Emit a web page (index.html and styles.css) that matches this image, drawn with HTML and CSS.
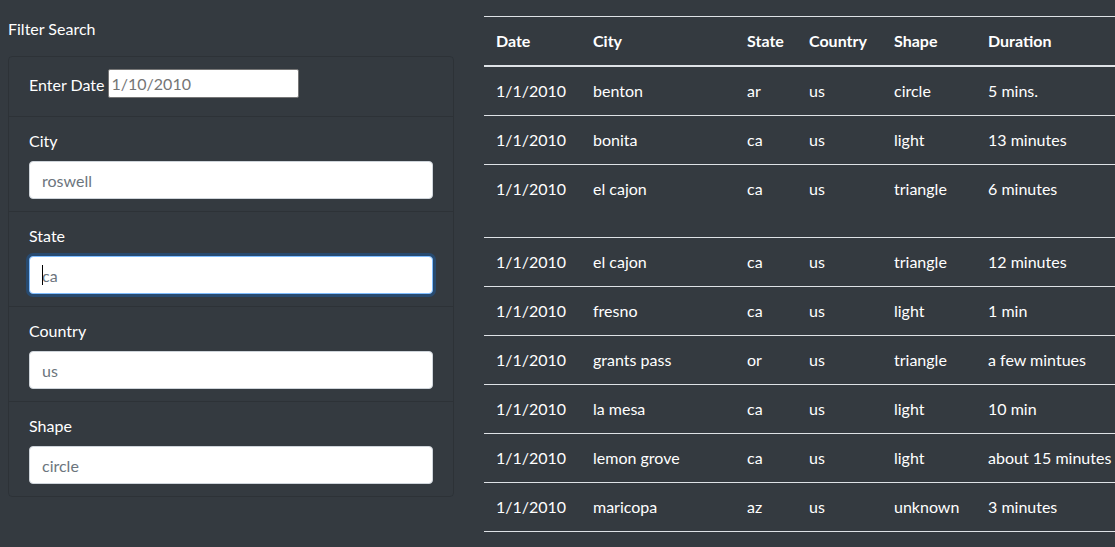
FILE: index.html
```html
<!DOCTYPE html>
<html lang="en">
<head>
<meta charset="utf-8">
<title>UFO Sightings</title>
<link rel="stylesheet" href="styles.css">
</head>
<body>
<div class="page">
  <aside class="filters">
    <div class="filters-title">Filter Search</div>
    <ul class="card">
      <li class="item item-date">
        <label class="inline-label" for="datetime">Enter Date</label>
        <input class="date-input" id="datetime" type="text" placeholder="1/10/2010">
      </li>
      <li class="item">
        <label class="label" for="city">City</label>
        <input class="form-control" id="city" type="text" placeholder="roswell">
      </li>
      <li class="item">
        <label class="label" for="state">State</label>
        <div class="field-wrap">
          <input class="form-control focused" id="state" type="text" placeholder="ca">
          <span class="caret"></span>
        </div>
      </li>
      <li class="item">
        <label class="label" for="country">Country</label>
        <input class="form-control" id="country" type="text" placeholder="us">
      </li>
      <li class="item">
        <label class="label" for="shape">Shape</label>
        <input class="form-control" id="shape" type="text" placeholder="circle">
      </li>
    </ul>
  </aside>
  <main class="results">
    <table class="table">
      <colgroup>
        <col class="c-date"><col class="c-city"><col class="c-state"><col class="c-country"><col class="c-shape"><col class="c-duration">
      </colgroup>
      <thead>
        <tr><th>Date</th><th>City</th><th>State</th><th>Country</th><th>Shape</th><th>Duration</th></tr>
      </thead>
      <tbody>
        <tr><td>1/1/2010</td><td>benton</td><td>ar</td><td>us</td><td>circle</td><td>5 mins.</td></tr>
        <tr><td>1/1/2010</td><td>bonita</td><td>ca</td><td>us</td><td>light</td><td>13 minutes</td></tr>
        <tr class="tall"><td>1/1/2010</td><td>el cajon</td><td>ca</td><td>us</td><td>triangle</td><td>6 minutes</td></tr>
        <tr><td>1/1/2010</td><td>el cajon</td><td>ca</td><td>us</td><td>triangle</td><td>12 minutes</td></tr>
        <tr><td>1/1/2010</td><td>fresno</td><td>ca</td><td>us</td><td>light</td><td>1 min</td></tr>
        <tr><td>1/1/2010</td><td>grants pass</td><td>or</td><td>us</td><td>triangle</td><td>a few mintues</td></tr>
        <tr><td>1/1/2010</td><td>la mesa</td><td>ca</td><td>us</td><td>light</td><td>10 min</td></tr>
        <tr><td>1/1/2010</td><td>lemon grove</td><td>ca</td><td>us</td><td>light</td><td>about 15 minutes</td></tr>
        <tr><td>1/1/2010</td><td>maricopa</td><td>az</td><td>us</td><td>unknown</td><td>3 minutes</td></tr>
      </tbody>
    </table>
  </main>
</div>
</body>
</html>
```
FILE: styles.css
```css
html, body {
  margin: 0;
  padding: 0;
  height: 100%;
  overflow: hidden;
}
body {
  background: #343a40;
  color: #ffffff;
  font-family: "Lato", "Liberation Sans", sans-serif;
  font-size: 16px;
  line-height: 24px;
}
.page {
  display: flex;
  align-items: flex-start;
  padding: 16px 0 0 8px;
}
.filters {
  flex: 0 0 446px;
  margin-right: 30px;
}
.filters-title {
  padding-top: 1px;
  margin-bottom: 15px;
}
.card {
  list-style: none;
  margin: 0;
  padding: 0;
  border: 1px solid rgba(0, 0, 0, 0.13);
  border-radius: 4px;
}
.item {
  padding: 12px 20px;
  border-top: 1px solid rgba(0, 0, 0, 0.13);
}
.item:first-child {
  border-top: 0;
}
.item-date {
  height: 59px;
  box-sizing: border-box;
  display: flex;
  align-items: flex-start;
}
.inline-label {
  margin-top: 4px;
  margin-right: 3px;
}
.date-input {
  width: 191px;
  height: 29px;
  box-sizing: border-box;
  border: 1px solid #767676;
  border-radius: 2px;
  padding: 1px 3px;
  font-family: inherit;
  font-size: 16px;
  color: #495057;
  background: #fff;
}
.date-input::placeholder {
  color: #757575;
}
.label {
  display: block;
  margin-bottom: 8px;
}
.form-control {
  display: block;
  width: 100%;
  height: 38px;
  box-sizing: border-box;
  padding: 6px 12px;
  font-family: inherit;
  font-size: 16px;
  line-height: 24px;
  color: #495057;
  background: #fff;
  border: 1px solid #ced4da;
  border-radius: 4px;
  outline: none;
}
.form-control::placeholder {
  color: #6c757d;
}
.field-wrap {
  position: relative;
}
.form-control.focused {
  border-color: #80bdff;
  box-shadow: 0 0 0 3px rgba(0, 123, 255, 0.25);
}
.caret {
  position: absolute;
  left: 13px;
  top: 9px;
  width: 1px;
  height: 20px;
  background: #000;
}
.results {
  flex: 1 1 auto;
  min-width: 0;
  overflow: hidden;
}
.table {
  border-collapse: collapse;
  table-layout: fixed;
  width: 100%;
}
.c-date { width: 97px; }
.c-city { width: 154px; }
.c-state { width: 62px; }
.c-country { width: 85px; }
.c-shape { width: 94px; }
.table th,
.table td {
  padding: 12px;
  text-align: left;
  vertical-align: top;
  border-top: 1px solid #dee2e6;
  white-space: nowrap;
}
.table th {
  font-weight: 700;
  border-bottom: 2px solid #dee2e6;
}
.table tbody tr:first-child td {
  border-top: 0;
}
.table tbody tr.tall td {
  padding-bottom: 36px;
}
.table tbody tr:last-child td {
  border-bottom: 1px solid #dee2e6;
}
```
